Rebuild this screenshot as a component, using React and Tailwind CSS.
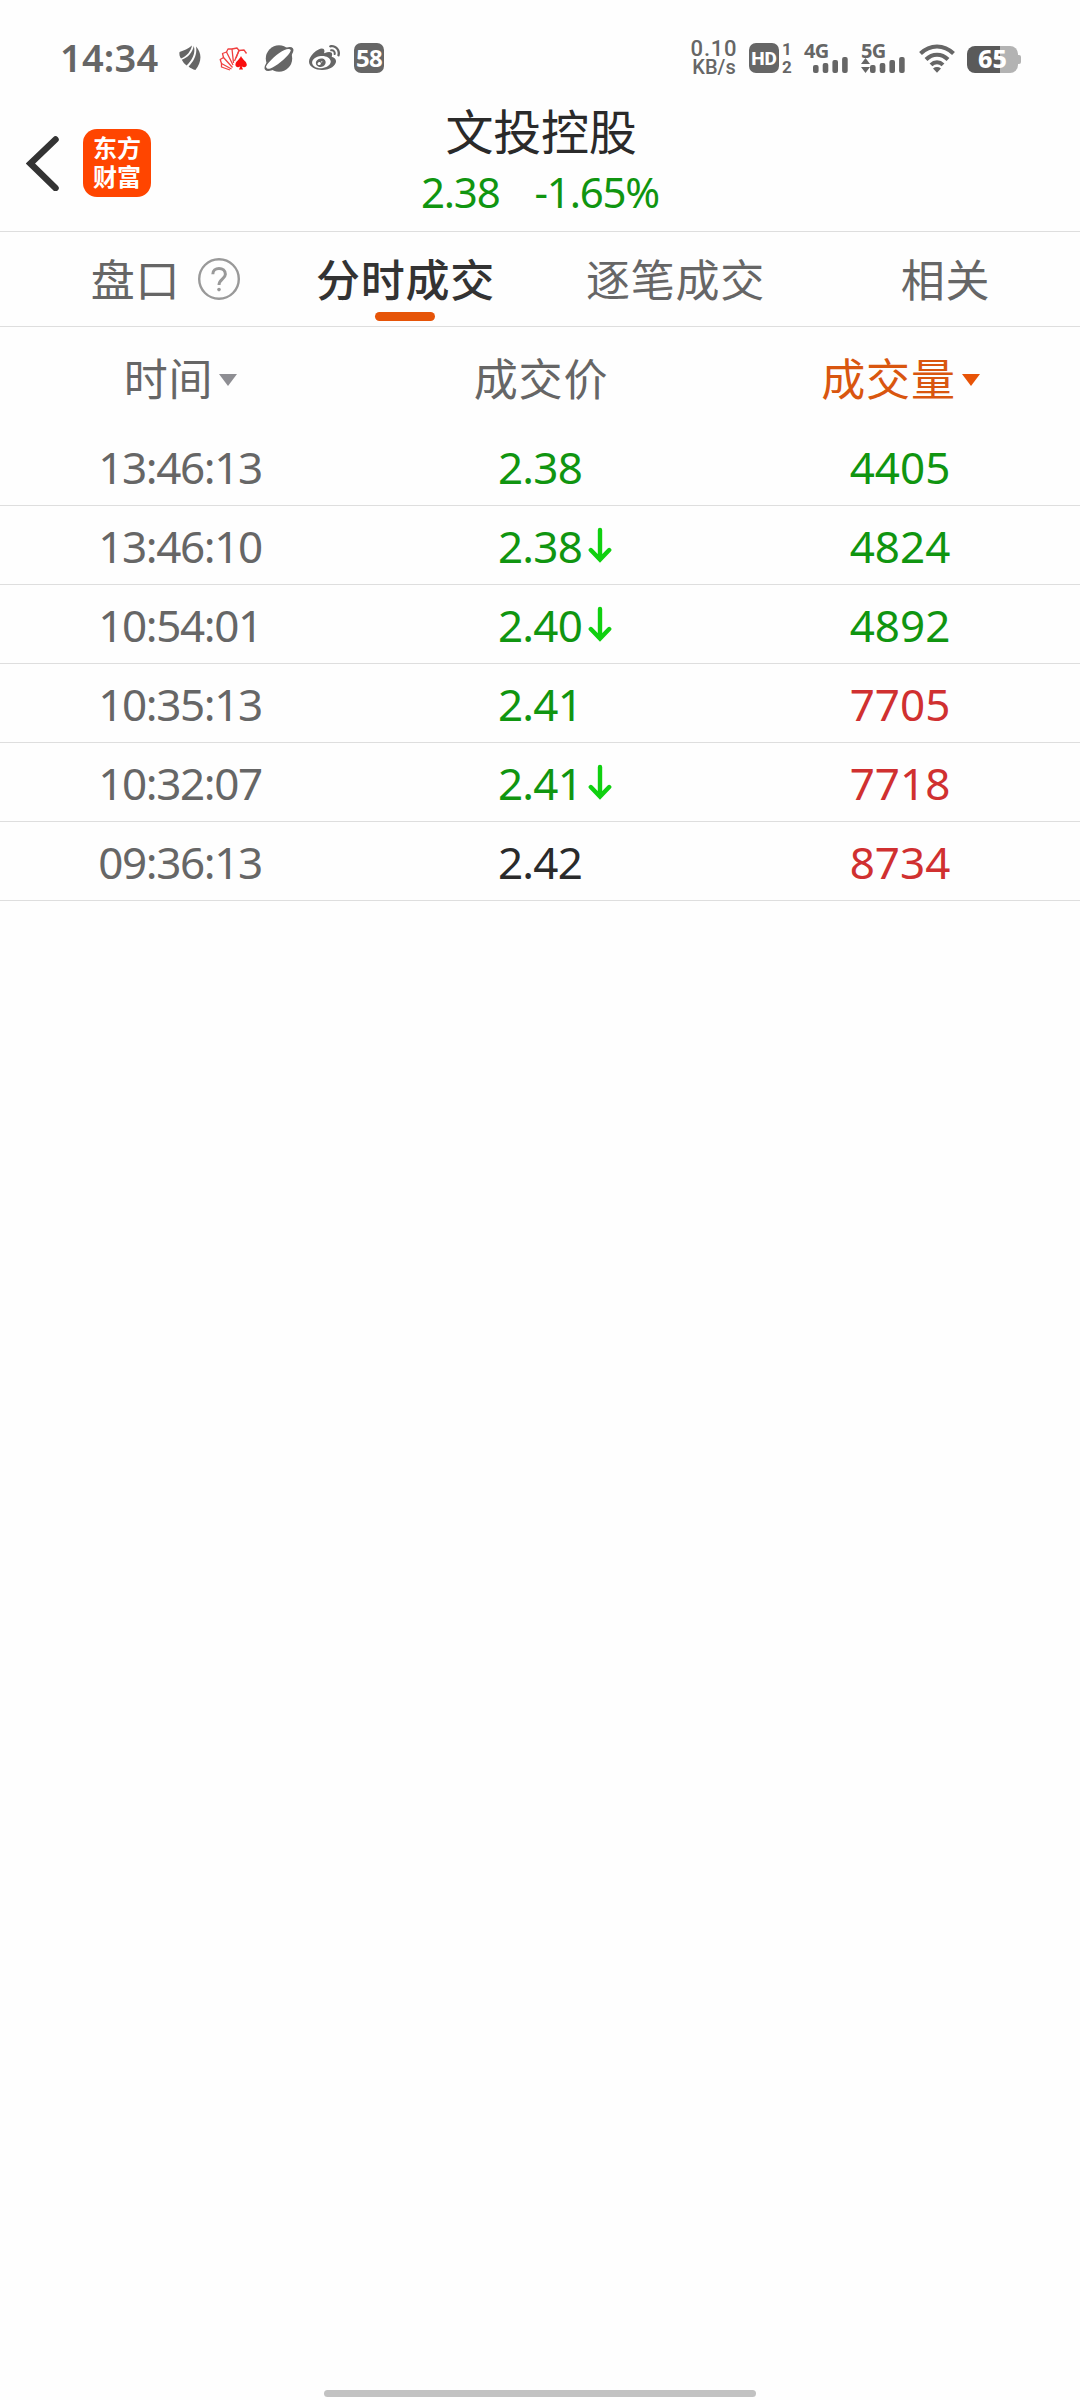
import { FaWeibo } from 'react-icons/fa';
import { clsx } from 'clsx';

const TABS = [
  { key: 'book', label: '盘口', help: true },
  { key: 'minute', label: '分时成交' },
  { key: 'tick', label: '逐笔成交' },
  { key: 'related', label: '相关' },
];

const TRADES = [
  { time: '13:46:13', price: '2.38', volume: '4405', trend: 'down', side: 'sell' },
  { time: '13:46:10', price: '2.38', volume: '4824', trend: 'down', side: 'sell', arrow: true },
  { time: '10:54:01', price: '2.40', volume: '4892', trend: 'down', side: 'sell', arrow: true },
  { time: '10:35:13', price: '2.41', volume: '7705', trend: 'down', side: 'buy' },
  { time: '10:32:07', price: '2.41', volume: '7718', trend: 'down', side: 'buy', arrow: true },
  { time: '09:36:13', price: '2.42', volume: '8734', trend: 'flat', side: 'buy' },
];

function SignalBars({ className }) {
  return (
    <svg width="35" height="16" viewBox="0 0 35 16" fill="#666" className={className}>
      <rect x="0" y="8" width="5.6" height="8" rx="2" />
      <rect x="9.7" y="6" width="5.6" height="10" rx="2" />
      <rect x="19.4" y="3" width="5.6" height="13" rx="2" />
      <rect x="29.1" y="0" width="5.6" height="16" rx="2" />
    </svg>
  );
}

function StatusBar() {
  return (
    <div className="flex h-[100px] items-start pt-[43px] pl-[60px] text-[#666]">
      <span className="-mt-px w-[98px] text-[38px] leading-[30px] font-semibold tracking-[0.2px] whitespace-nowrap">14:34</span>

      {/* Wing */}
      <svg width="22" height="26" viewBox="0 0 22 26" fill="#666" className="mt-0.5 ml-[21px]">
        <path d="M0.5 7 C5 5.5 9 4 13 0.5 C12 6 8 11 2 13.5 C0.6 11.5 0.1 9.5 0.5 7 Z" />
        <path d="M14.8 1 C17 8 13 15.5 7.6 20.6 C5.6 19 3.8 17 2.8 14.8 C9 12.5 13.5 7.5 14.8 1 Z" />
        <path d="M17 1.5 C23.5 8.5 22.5 17.5 16.4 25 C13.8 24.2 11.4 23 9.6 21.4 C15 16 18.4 9 17 1.5 Z" />
      </svg>

      {/* Card fan */}
      <svg width="30" height="25" viewBox="0 0 30 25" fill="none" stroke="#f04040" strokeWidth="1.3" strokeLinejoin="round" className="mt-1 ml-[18px]">
        <path d="M12.5 22 L2.5 16.5 L1.2 12.5 L4.5 10.5 L13.5 20.5" />
        <path d="M4.5 10.5 L3.5 6.5 L7.5 5 L14 18" />
        <path d="M7.5 5 L9 2 L13 2 L14.5 16" />
        <path d="M13 2 L18 1 L20 3.5 L15.5 14" />
        <path d="M20 3.5 L25 3 L27.5 6.5" />
        <path d="M20 3.5 L17 11" />
        <path d="M2.5 16.5 L2.5 20 L11 23" />
        <path d="M22 9 C20.2 13 16.4 14.5 16.4 17.8 C16.4 20.4 19.5 21.2 21.3 19.2 L20 22.6 H24 L22.7 19.2 C24.5 21.2 27.8 20.4 27.8 17.8 C27.8 14.5 23.8 13 22 9 Z" fill="#f90d0d" stroke="none" />
      </svg>

      {/* Planet */}
      <svg width="30" height="28" viewBox="0 0 30 28" className="mt-0.5 ml-[15px]">
        <circle cx="15" cy="13.5" r="13.2" fill="#666" />
        <ellipse cx="15" cy="14" rx="17.6" ry="6.6" transform="rotate(-38 15 14)" fill="#666" />
        <path d="M2 21.5 C5 16 14 8 20.5 5 C24 3.5 26.5 4 26.8 5.5 C25 11 15 19 8.5 22.5 C5 24.5 2.4 24.3 2 21.5 Z" fill="#fff" />
      </svg>

      <FaWeibo size={31} className="ml-[15px]" />

      <span className="ml-3.5 flex h-[30px] w-[30px] items-center justify-center rounded-[7px] bg-[#666] pb-px text-[24px] leading-none font-bold tracking-[-0.8px] text-white">
        58
      </span>

      <div className="-mt-1 ml-[307px] flex w-[46px] flex-col items-center font-['Roboto'] text-[22px] leading-[20px] font-medium">
        <span className="tracking-[0.8px]">0.10</span>
        <span className="text-[20px] leading-[17px]">KB/s</span>
      </div>

      <span className="ml-[12px] flex h-[30px] w-[30px] items-center justify-center rounded-[7px] bg-[#666] font-['Roboto'] text-[19px] leading-none font-extrabold text-white">
        HD
      </span>
      <div className="-mt-[3px] ml-[3px] flex w-2.5 flex-col items-center font-['Roboto'] text-[17px] leading-[18px] font-bold">
        <span>1</span>
        <span>2</span>
      </div>

      <div className="ml-3 w-11 text-[20px] leading-[15px] font-bold">
        <span className="block h-3.5 tracking-[-0.8px]">4G</span>
        <SignalBars className="ml-[9px]" />
      </div>
      <div className="ml-[13px] w-11 text-[20px] leading-[15px] font-bold">
        <span className="block h-3.5 tracking-[-0.8px]">5G</span>
        <div className="flex items-end">
          <svg width="9" height="15" viewBox="0 0 9 15" fill="#666">
            <path d="M4.5 0 L9 6 H0 Z" />
            <path d="M0 9 H9 L4.5 15 Z" />
          </svg>
          <SignalBars />
        </div>
      </div>

      {/* Wifi */}
      <svg width="36" height="30" viewBox="0 0 36 30" fill="none" stroke="#666" strokeWidth="4" className="ml-3.5">
        <path d="M1.5 10.5 C11 1 25 1 34.5 10.5" />
        <path d="M7 16.5 C13.5 10 22.5 10 29 16.5" />
        <path d="M12 21.8 C15.5 18.3 20.5 18.3 24 21.8" />
        <path d="M14 25.5 C16.5 23.6 19.5 23.6 22 25.5 L18 29.8 Z" fill="#666" stroke="none" />
      </svg>

      <div className="mt-[3px] ml-3 flex items-center">
        <div className="flex h-[27px] w-[51px] items-center justify-center rounded-[8px] bg-linear-to-r from-[#5a5a5a] from-65% to-[#b3b3b3] to-65% pb-0.5 text-[25px] leading-none font-extrabold text-white">
          65
        </div>
        <div className="h-[9px] w-[3px] rounded-r-[2px] bg-[#b3b3b3]" />
      </div>
    </div>
  );
}

function Header() {
  return (
    <header className="flex h-[132px] border-b-[1px] border-[#dedede]">
      <div className="flex w-[360px] items-start pt-[29px] pl-[26px]">
        <svg width="34" height="56" viewBox="0 0 34 56" fill="none" stroke="#333" strokeWidth="6.5" strokeLinecap="round" className="mt-1.5">
          <path d="M29.5 4.5 L4.5 28.5 L29.5 53" strokeLinejoin="miter" />
        </svg>
        <div className="ml-[23px] flex h-[68px] w-[68px] flex-col items-center justify-center rounded-[14px] bg-[#ff4500] pb-0.5 text-[24px] leading-[29px] font-bold text-white">
          <span>东方</span>
          <span>财富</span>
        </div>
      </div>
      <div className="flex w-[360px] flex-col items-center">
        <h1 className="mt-[5px] ml-0.5 text-[48px] leading-[54px] tracking-[-0.3px] text-[#2a2a2a]">文投控股</h1>
        <div className="mt-[7px] flex gap-[35px] text-[42px] leading-[52px] tracking-[-1.2px] text-[#109510]">
          <span>2.38</span>
          <span>-1.65%</span>
        </div>
      </div>
    </header>
  );
}

function Tabs({ active }) {
  return (
    <nav className="grid h-[95px] grid-cols-4 border-b-[1px] border-[#dedede]">
      {TABS.map((tab) => (
        <div key={tab.key} className="relative flex justify-center pt-[22px]">
          <span
            className={clsx(
              'pl-px text-[44px] leading-[52px] tracking-[0.8px]',
              tab.key === active ? 'font-medium text-[#333]' : 'text-[#666]'
            )}
          >
            {tab.label}
          </span>
          {tab.help && (
            <svg width="42" height="42" viewBox="0 0 42 42" fill="none" stroke="#999" className="absolute top-[26px] left-[198px]">
              <circle cx="21" cy="21" r="19.8" strokeWidth="2.4" />
              <path d="M14.8 16.2 C14.8 12.4 17.6 10.4 21 10.4 C24.6 10.4 27.4 12.6 27.4 16.2 C27.4 20.6 21 21.2 21 27" strokeWidth="3" />
              <circle cx="21" cy="31.6" r="1.8" fill="#999" stroke="none" />
            </svg>
          )}
          {tab.key === active && <div className="absolute top-20 h-[9px] w-[60px] rounded-full bg-[#e65408]" />}
        </div>
      ))}
    </nav>
  );
}

function Caret({ className }) {
  return (
    <svg width="18" height="12" viewBox="0 0 18 12" fill="currentColor" className={className}>
      <path d="M0 0 H18 L9 12 Z" />
    </svg>
  );
}

function TableHead() {
  return (
    <div className="grid h-[100px] grid-cols-3 text-[44px] leading-[52px] tracking-[0.8px] text-[#666]">
      <div className="flex items-start justify-center pt-[26px]">
        <span className="ml-px">时间</span>
        <Caret className="mt-[21px] ml-1.5 text-[#8e8e93]" />
      </div>
      <div className="flex justify-center pt-[26px] pl-0.5">成交价</div>
      <div className="flex items-start justify-center pt-[26px] text-[#d9560f]">
        <span className="ml-px">成交量</span>
        <Caret className="mt-[21px] ml-1.5 text-[#e85407]" />
      </div>
    </div>
  );
}

function TradeRow({ trade }) {
  return (
    <div className="grid h-[79px] grid-cols-3 border-b-[1px] border-[#dedede] pt-1.5 text-[44px] leading-[68px]">
      <div className="text-center tracking-[-1.4px] text-[#666]">{trade.time}</div>
      <div className={clsx('flex justify-center tracking-[-0.8px]', trade.trend === 'down' ? 'text-[#109510]' : 'text-[#2a2a2a]')}>
        <span className="relative">
          {trade.price}
          {trade.arrow && (
            <svg width="24" height="36" viewBox="0 0 24 36" fill="none" stroke="#10d010" strokeWidth="4.4" strokeLinecap="round" className="absolute top-[15px] left-full ml-1.5">
              <path d="M12 3 V32 M2.8 23 L12 32.5 L21.2 23" />
            </svg>
          )}
        </span>
      </div>
      <div className={clsx('text-center', trade.side === 'sell' ? 'text-[#109510]' : 'text-[#d03030]')}>{trade.volume}</div>
    </div>
  );
}

export default function App() {
  return (
    <div className="flex h-[2400px] w-[1080px] flex-col bg-[#fefefe] font-['Noto_Sans','Noto_Sans_CJK_SC',sans-serif]">
      <StatusBar />
      <Header />
      <Tabs active="minute" />
      <main className="flex-1">
        <TableHead />
        {TRADES.map((trade) => (
          <TradeRow key={trade.time} trade={trade} />
        ))}
      </main>
      <div className="mb-[3px] h-[7px] w-[432px] self-center rounded-full bg-[#c2c2c2]" />
    </div>
  );
}
